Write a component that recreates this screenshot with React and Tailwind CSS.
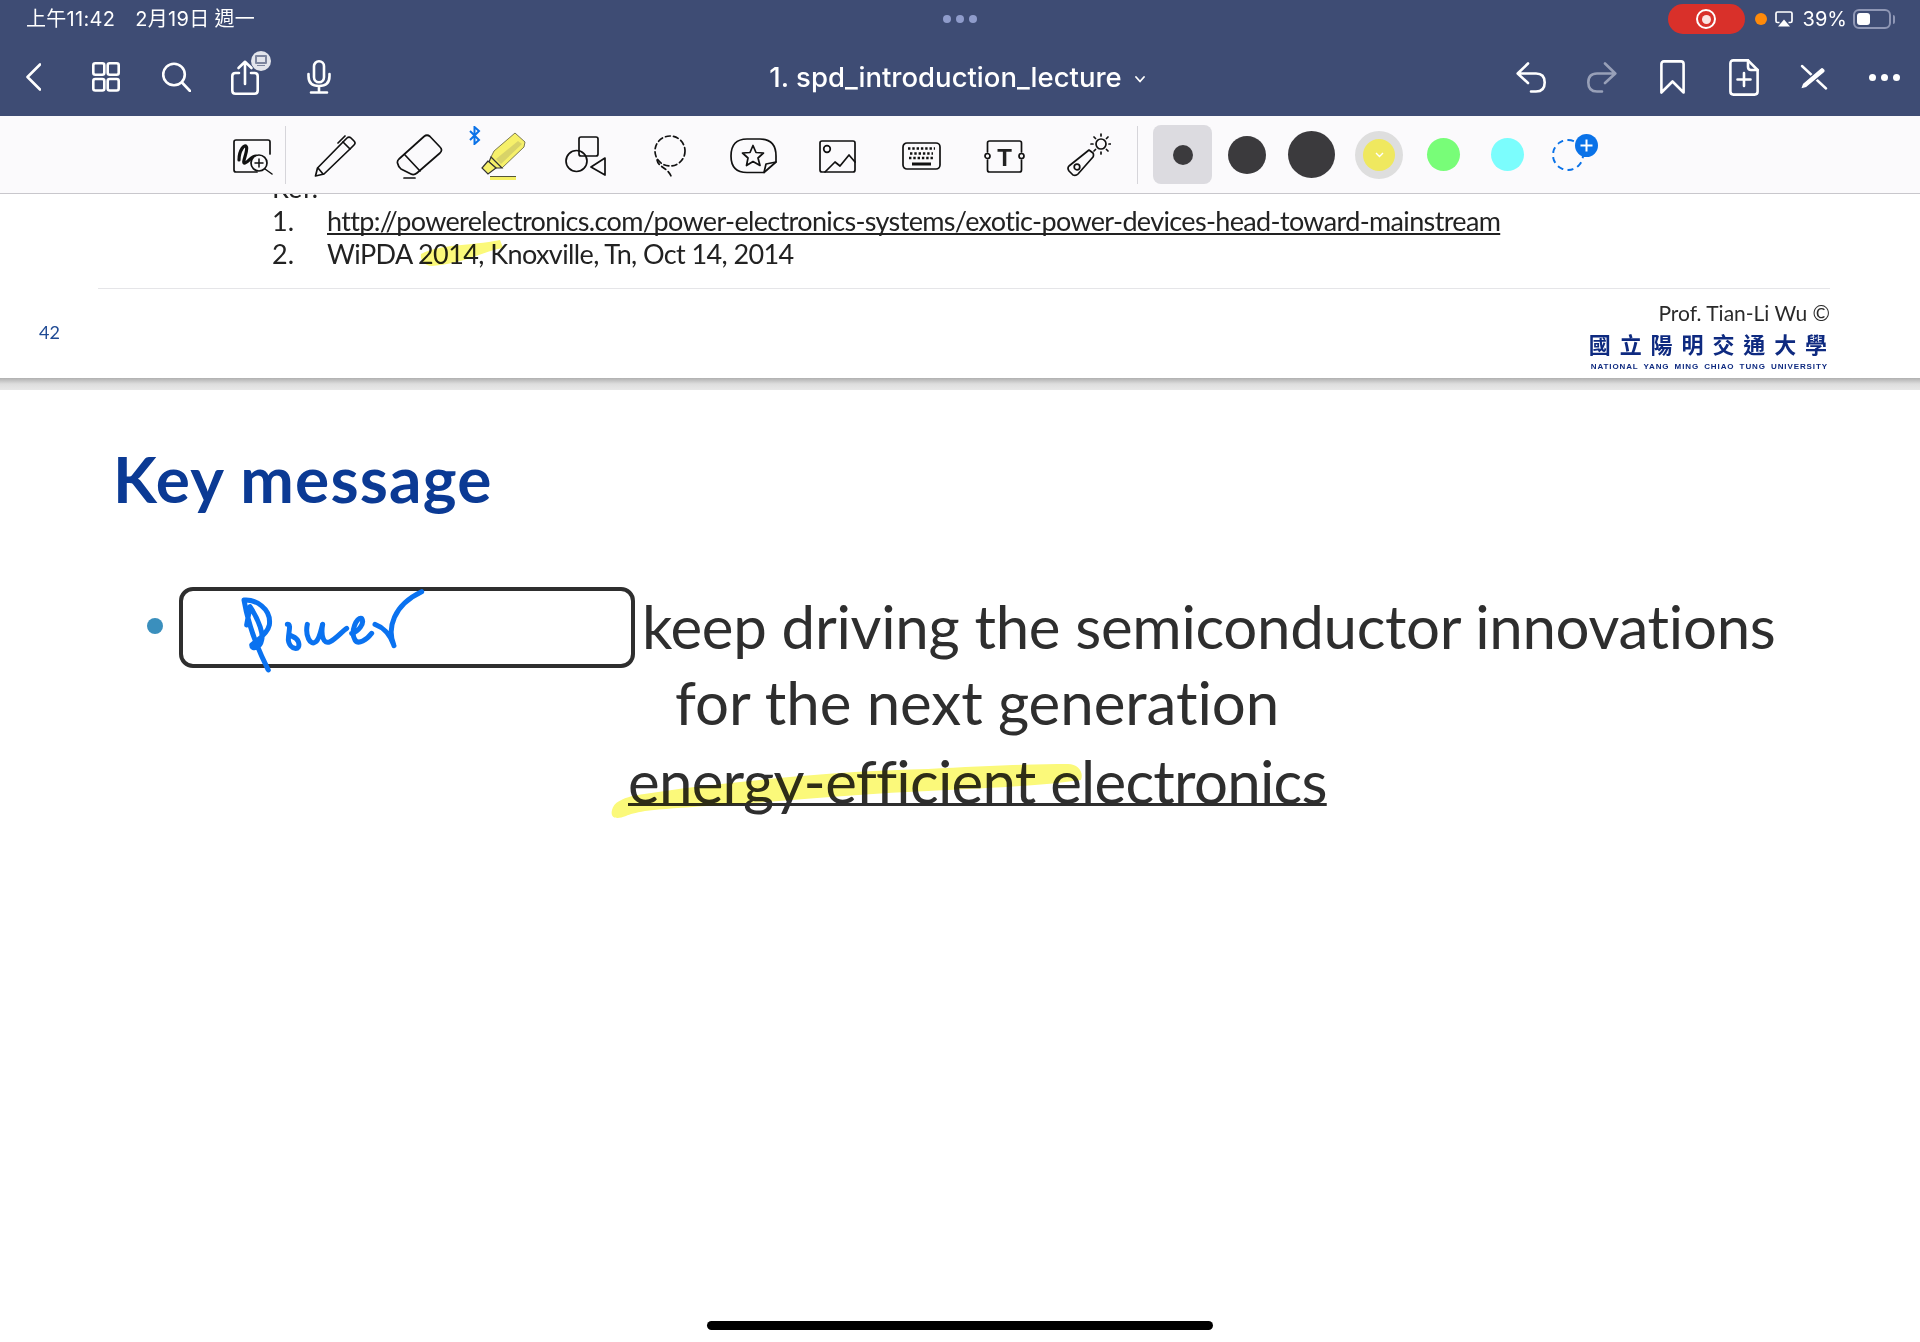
import React from "react";

const ui = "[font-family:Inter,'Noto_Sans_CJK_TC',sans-serif]";
const slide = "[font-family:Lato,'Noto_Sans',sans-serif]";
const ink = "#111";

const NavIcon = ({ w, h, children, className = "" }) => (
  <svg width={w} height={h} viewBox={`0 0 ${w} ${h}`} fill="none" stroke="white" strokeWidth="2.6" strokeLinecap="round" strokeLinejoin="round" className={"shrink-0 " + className}>
    {children}
  </svg>
);

const ToolIcon = ({ w, h, children, className = "" }) => (
  <svg width={w} height={h} viewBox={`0 0 ${w} ${h}`} fill="none" stroke={ink} strokeWidth="1.7" strokeLinecap="round" strokeLinejoin="round" className={"shrink-0 mt-[3px] " + className}>
    {children}
  </svg>
);

const StatusBar = () => (
  <div className="h-[38px] grid grid-cols-[1fr_auto_1fr] items-center text-white">
    <div className="pl-[26px] flex items-center text-[20px] tracking-[0.3px] whitespace-pre">
      <span>上午11:42</span>
      <span className="ml-[20px]">2月19日</span>
      <span className="ml-[5px]">週一</span>
    </div>
    <div className="flex gap-[5px]">
      <span className="w-[8px] h-[8px] rounded-full bg-[#8f9ccb]" />
      <span className="w-[8px] h-[8px] rounded-full bg-[#8f9ccb]" />
      <span className="w-[8px] h-[8px] rounded-full bg-[#8f9ccb]" />
    </div>
    <div className="flex items-center justify-end pr-[25px]">
      <div className="w-[77px] h-[30px] rounded-full bg-[#d9302a] flex items-center justify-center">
        <span className="w-[20px] h-[20px] rounded-full border-2 border-white flex items-center justify-center">
          <span className="w-[9px] h-[9px] rounded-full bg-[#fbe4e2]" />
        </span>
      </div>
      <span className="ml-[10px] w-[12px] h-[12px] rounded-full bg-[#ff8a0a]" />
      <svg width="18" height="16" viewBox="0 0 18 16" fill="none" className="ml-[8px]">
        <path d="M4.5 11.5H2.5Q1 11.5 1 10V2.5Q1 1 2.5 1H15.5Q17 1 17 2.5V10Q17 11.5 15.5 11.5H13.5" stroke="white" strokeWidth="1.7" />
        <path d="M9 8.5L15 15.5H3Z" fill="white" />
      </svg>
      <span className="ml-[10px] text-[20px] leading-none">39%</span>
      <div className="ml-[6px] w-[38px] h-[20px] rounded-[6px] border-2 border-[#8f97b5] p-[2px]">
        <div className="w-[13px] h-full rounded-[3px] bg-white" />
      </div>
      <span className="ml-[2px] w-[2px] h-[9px] rounded-r bg-[#8f97b5]" />
    </div>
  </div>
);

const NavBar = () => (
  <div className="h-[78px] grid grid-cols-[1fr_auto_1fr] items-center text-white">
    <div className="pl-[26px] flex items-center">
      <NavIcon w={15} h={28}>
        <path d="M14 1.5L1.5 14L14 26.5" />
      </NavIcon>
      <NavIcon w={28} h={30} className="ml-[51px]">
        <rect x="1.3" y="1.3" width="11" height="11.5" rx="2" />
        <rect x="15.7" y="1.3" width="11" height="11.5" rx="2" />
        <rect x="1.3" y="17" width="11" height="11.5" rx="2" />
        <rect x="15.7" y="17" width="11" height="11.5" rx="2" />
      </NavIcon>
      <NavIcon w={29} h={30} className="ml-[42px]">
        <circle cx="12" cy="12.5" r="10.8" />
        <path d="M20 20.5L28 29" />
      </NavIcon>
      <div className="relative ml-[40px] w-[28px] h-[35px]">
        <NavIcon w={28} h={35}>
          <path d="M8 13H4.5Q1.3 13 1.3 16V30.5Q1.3 33.7 4.5 33.7H23.5Q26.7 33.7 26.7 30.5V16Q26.7 13 23.5 13H20" />
          <path d="M14 24V2M7.5 8L14 1.8L20.5 8" />
        </NavIcon>
        <span className="absolute left-[20px] top-[-9px] w-[20px] h-[20px] rounded-full bg-[#e3e5ec] flex flex-col items-center justify-center">
          <span className="w-[12px] h-[9px] rounded-[1px] border-2 border-[#7d859e]" />
          <span className="w-[8px] h-[1px] bg-[#7d859e] mt-[1px]" />
        </span>
      </div>
      <NavIcon w={24} h={34} className="ml-[48px]">
        <rect x="7" y="1.3" width="10" height="21" rx="5" />
        <path d="M1.5 14V16Q1.5 26 12 26Q22.5 26 22.5 16V14M12 26V32.5M4 32.5H20" />
      </NavIcon>
    </div>
    <div className={"flex items-center font-medium text-[27.5px] leading-none pr-[6px] mt-[2px] " + ui}>
      <span>1. spd_introduction_lecture</span>
      <svg width="10" height="7" viewBox="0 0 10 7" fill="none" stroke="white" strokeWidth="1.8" strokeLinecap="round" strokeLinejoin="round" className="ml-[13px] mt-[3px]">
        <path d="M1 1L5 5.5L9 1" />
      </svg>
    </div>
    <div className="flex items-center justify-end pr-[20px]">
      <NavIcon w={30} h={31}>
        <path d="M12 1.5L1.7 11.5L12 21M2.5 11.5H20Q28.7 11.5 28.7 20.5Q28.7 29.5 20 29.5H15" />
      </NavIcon>
      <svg width="31" height="31" viewBox="0 0 31 31" fill="none" stroke="#98a0b8" strokeWidth="2.6" strokeLinecap="round" strokeLinejoin="round" className="ml-[40px]">
        <path d="M19 1.5L29.3 11.5L19 21M28.5 11.5H11Q2.3 11.5 2.3 20.5Q2.3 29.5 11 29.5H16" />
      </svg>
      <NavIcon w={25} h={34} className="ml-[43px]">
        <path d="M1.4 32.5V4Q1.4 1.4 4 1.4H21Q23.6 1.4 23.6 4V32.5L12.5 21.5Z" />
      </NavIcon>
      <NavIcon w={30} h={37} className="ml-[44px]">
        <path d="M19 1.4H4.5Q1.4 1.4 1.4 4.5V32.5Q1.4 35.6 4.5 35.6H25.5Q28.6 35.6 28.6 32.5V11Z" />
        <path d="M19 1.4V8Q19 11 22 11H28.6" />
        <path d="M15 14V27M8.5 20.5H21.5" />
      </NavIcon>
      <NavIcon w={29} h={26} className="ml-[40px]">
        <path d="M3 2L27 24.5" strokeWidth="2.4" />
        <path d="M1.5 25L3.5 19.5L21 4.5Q23 2.5 24.5 4L26 5.5Q27 7.5 25 9L7.5 23.5Z" fill="white" stroke="#3e4c74" strokeWidth="1.2" />
      </NavIcon>
      <div className="ml-[41px] flex gap-[5px]">
        <span className="w-[7px] h-[7px] rounded-full bg-white" />
        <span className="w-[7px] h-[7px] rounded-full bg-white" />
        <span className="w-[7px] h-[7px] rounded-full bg-white" />
      </div>
    </div>
  </div>
);

const ToolBar = () => (
  <div className="h-[78px] bg-[#fbfafc] border-b border-[#c8c7cc] flex items-center pl-[233px]">
    <ToolIcon w={40} h={37}>
      <path d="M24 34H3Q1 34 1 32V4Q1 2 3 2H35Q37 2 37 4V16" />
      <path d="M6 22C6 12 12 5 13.5 9C15 14 8 26 12 25C16 24 18 18 23 18" strokeWidth="3.2" />
      <circle cx="26" cy="25" r="8" fill="#fbfafc" />
      <path d="M22 25H30M26 21V29M32 31L39 36" strokeWidth="1.5" />
    </ToolIcon>
    <span className="ml-[12px] w-px h-[58px] bg-[#d6d5da]" />
    <ToolIcon w={42} h={44} className="ml-[28px]">
      <path d="M1.5 42L3.5 34L29 8L36 15L10 40Z" />
      <path d="M29 8L33 4Q35 2 37 4L40 7Q42 9 40 11L36 15M4 34L9 40M24 9L31 2" />
    </ToolIcon>
    <ToolIcon w={47} h={45} className="ml-[40px]">
      <path d="M28 2.5Q31 0 34 2.5L44 13Q47 16 44 19L21 39Q18 41.5 15 40L5 35Q2 32 1.5 29Q1 27 3 25Z" />
      <path d="M9 21L24 37M8 44H19" />
    </ToolIcon>
    <div className="relative ml-[38px] w-[46px] h-[50px] mt-[5px]">
      <svg width="46" height="50" viewBox="0 0 46 50">
        <path d="M34 1L44 10L43 15L21 36L10 25L13 19Z" fill="#f6f06a" stroke="#5e5c3a" strokeWidth="0.8" />
        <path d="M41 12L20 32L15 27L37 9Z" fill="#d8d368" />
        <path d="M10 25L21 36L15 36L8 30Z" fill="#f6f06a" stroke="#333" strokeWidth="1.2" />
        <path d="M7 29L1 36L7 42L15 36Z" fill="#f6f06a" stroke="#333" strokeWidth="1.2" />
        <rect x="9" y="45" width="26" height="3" fill="#f5ef63" />
        <rect x="9" y="44" width="26" height="1" fill="#55553a" />
      </svg>
      <svg width="12" height="19" viewBox="0 0 12 19" fill="none" stroke="#0a72e8" strokeWidth="2" className="absolute left-[-12px] top-[-6px]">
        <path d="M1 5L10 14L5.5 18V1L10 5L1 14" />
      </svg>
    </div>
    <ToolIcon w={41} h={40} className="ml-[38px]">
      <rect x="14" y="1" width="19" height="19" rx="2" />
      <circle cx="11.5" cy="25" r="10.5" />
      <path d="M40 22L26 31L40 39Z" />
    </ToolIcon>
    <ToolIcon w={36} h={42} className="ml-[46px]">
      <circle cx="18" cy="16" r="15" strokeDasharray="5 3.2" />
      <path d="M5 25C6 32 16 33 19 41" strokeDasharray="5 3.2" />
    </ToolIcon>
    <ToolIcon w={47} h={36} className="ml-[42px]">
      <path d="M34 34.5H17Q1 34.5 1 18Q1 1 17 1H30Q46 1 46 18V24Z" />
      <path d="M34 34.5L36 26L46 24" />
      <path d="M23 7.5L26 14.5L33.5 15L28 20L30 27.5L23 23.5L16.5 27.5L18 20L12.5 15L20 14.5Z" />
    </ToolIcon>
    <ToolIcon w={37} h={33} className="ml-[42px]">
      <rect x="1" y="1" width="35" height="31" rx="2" />
      <circle cx="8" cy="9" r="3.3" />
      <path d="M6 32L16 22L21 26L30 15L36 22" />
    </ToolIcon>
    <ToolIcon w={39} h={28} className="ml-[46px]">
      <rect x="1" y="1" width="37" height="26" rx="4" />
      <path d="M6 6.5H33M8 11.5H31M7 16H32" strokeWidth="2.6" strokeDasharray="2.4 1.9" strokeLinecap="butt" />
      <path d="M10 22H29" strokeWidth="3" strokeLinecap="butt" />
    </ToolIcon>
    <ToolIcon w={41} h={33} className="ml-[43px]">
      <path d="M3.5 12V3Q3.5 1 5.5 1H35.5Q37.5 1 37.5 3V12M3.5 20V30Q3.5 32 5.5 32H35.5Q37.5 32 37.5 30V20" />
      <circle cx="3.5" cy="16" r="2.5" />
      <circle cx="37.5" cy="16" r="2.5" />
      <text x="20.5" y="26" textAnchor="middle" fill="#222" stroke="none" fontSize="24" fontWeight="700" fontFamily="Liberation Sans">T</text>
    </ToolIcon>
    <ToolIcon w={44} h={44} className="ml-[42px] mb-[3px]">
      <path d="M22 17L26 20Q27 22 26 24L11 41Q9 43 6 42L2 38Q0 35 2 33Z" />
      <circle cx="10" cy="34" r="2.8" />
      <circle cx="34" cy="11" r="5" />
      <path d="M34 1V3M34 19V21M24 11H26M42 11H44M27 4L28.5 5.5M39.5 16.5L41 18M41 4L39.5 5.5M28.5 16.5L27 18" />
    </ToolIcon>
    <span className="ml-[26px] w-px h-[58px] bg-[#d6d5da]" />
    <div className="ml-[15px] w-[59px] h-[59px] rounded-[8px] bg-[#dcdbe0] flex items-center justify-center">
      <span className="w-[20px] h-[20px] rounded-full bg-[#3b3a3d]" />
    </div>
    <span className="ml-[16px] w-[38px] h-[38px] rounded-full bg-[#3b3a3d]" />
    <span className="ml-[22px] w-[47px] h-[47px] rounded-full bg-[#3b3a3d]" />
    <div className="ml-[20px] w-[48px] h-[48px] rounded-full bg-[#dedede] flex items-center justify-center">
      <div className="w-[32px] h-[32px] rounded-full bg-[#efe85f] flex items-center justify-center">
        <svg width="9" height="6" viewBox="0 0 9 6" fill="none" stroke="white" strokeWidth="1.4">
          <path d="M1 1L4.5 4.5L8 1" />
        </svg>
      </div>
    </div>
    <span className="ml-[24px] w-[33px] h-[33px] rounded-full bg-[#78fd78]" />
    <span className="ml-[31px] w-[33px] h-[33px] rounded-full bg-[#7bfdfd]" />
    <div className="relative ml-[28px] w-[32px] h-[32px]">
      <span className="block w-[32px] h-[32px] rounded-full border-2 border-dashed border-[#0a72e8]" />
      <span className="absolute left-[23px] top-[-5px] w-[23px] h-[23px] rounded-full bg-[#0a72e8] flex items-center justify-center">
        <svg width="13" height="13" viewBox="0 0 13 13" stroke="white" strokeWidth="2">
          <path d="M6.5 0.5V12.5M0.5 6.5H12.5" />
        </svg>
      </span>
    </div>
  </div>
);

const TopSlide = () => (
  <div className={"relative h-[184px] bg-white overflow-hidden text-[#222] " + slide}>
    <div className="ml-[272px] mt-[-23px] text-[27px] leading-[33px]">
      <div>Ref:</div>
      <div className="flex">
        <span className="w-[55px]">1.</span>
        <span className="underline [text-decoration-skip-ink:none] tracking-[-0.65px]">http://powerelectronics.com/power-electronics-systems/exotic-power-devices-head-toward-mainstream</span>
      </div>
      <div className="flex">
        <span className="w-[55px]">2.</span>
        <span className="tracking-[-0.6px]">WiPDA 2014, Knoxville, Tn, Oct 14, 2014</span>
      </div>
    </div>
    <div className="ml-[98px] mr-[90px] mt-[18px] h-px bg-[#e5e5e8]" />
    <div className="flex justify-between pl-[39px] pr-[90px]">
      <span className="mt-[33px] text-[18px] leading-[20px] text-[#1f4a94]">42</span>
      <div className="flex flex-col items-end">
        <span className="mt-[12px] text-[21px] leading-[24px] text-[#2a2a2a]">Prof. Tian-Li Wu ©</span>
        <span className="mt-[6px] text-[22px] leading-[24px] font-bold tracking-[8.9px] mr-[-6px] text-[#0e2a80] [font-family:'Noto_Sans_CJK_TC',sans-serif]">國立陽明交通大學</span>
        <span className="mt-[7px] mr-[2px] text-[8px] leading-[10px] font-bold tracking-[0.9px] [word-spacing:2px] text-[#0e2a80] [font-family:'Liberation_Sans',sans-serif] whitespace-nowrap">NATIONAL YANG MING CHIAO TUNG UNIVERSITY</span>
      </div>
    </div>
    <svg width="1920" height="184" viewBox="0 0 1920 184" className="absolute left-0 top-0 mix-blend-multiply pointer-events-none">
      <path d="M421 60C440 50 470 52 500 46L503 54C480 58 470 68 432 72C424 72 420 66 421 60Z" fill="#fbf97a" />
    </svg>
  </div>
);

const MainSlide = () => (
  <div className={"relative flex-1 flex flex-col bg-white text-[#2e2e2e] " + slide}>
    <h1 className="ml-[113px] mt-[49px] text-[64px] leading-[80px] font-bold tracking-[1.2px] text-[#0b3a94]">Key message</h1>
    <div className="mt-[69px] text-[60px] leading-[76px]">
      <div className="flex items-center whitespace-nowrap">
        <span className="ml-[147px] w-[16px] h-[16px] rounded-full bg-[#3a8fbd]" />
        <span className="ml-[479px] tracking-[-0.3px]">keep driving the semiconductor innovations</span>
      </div>
      <div className="ml-[675px] tracking-[-0.05px]">for the next generation</div>
      <div className="ml-[628px] mt-[3px] w-fit tracking-[-0.75px] underline [text-decoration-skip-ink:none] decoration-[3px] underline-offset-[-1px]">energy-efficient electronics</div>
    </div>
    <div className="absolute left-[179px] top-[197px] w-[456px] h-[81px] rounded-[14px] border-4 border-[#2e2e2e] bg-white" />
    <svg width="200" height="90" viewBox="0 0 600 270" fill="none" stroke="#0a72f0" strokeWidth="15" strokeLinecap="round" strokeLinejoin="round" className="absolute left-[230px] top-[195px]">
      <path d="M115 255C100 225 60 150 42 45C75 42 125 70 118 120C112 150 75 170 65 180C65 195 90 190 95 165C100 150 90 110 60 65L50 120" />
      <path d="M172 118C185 118 175 140 175 165C178 195 215 200 205 170C200 155 185 155 180 150" />
      <path d="M232 118C225 150 240 185 258 170C270 160 275 125 278 118C272 150 280 180 300 170C320 160 335 140 350 130" />
      <path d="M365 145C385 140 405 115 395 100C380 95 360 140 375 165C385 180 410 165 425 145" />
      <path d="M435 118C455 125 480 145 492 182C470 130 490 60 575 20" />
    </svg>
    <svg width="1920" height="150" viewBox="0 0 1920 150" className="absolute left-0 top-[320px] mix-blend-multiply pointer-events-none">
      <path d="M612 100C614 92 622 89 632 86C680 78 720 74 779 68C830 63 880 60 928 59C980 56 1030 54 1068 54C1078 54 1084 62 1081 70C1040 76 990 78 928 81C880 83 830 87 779 91C730 95 680 97 645 101C635 103 630 104 626 106C616 110 610 108 612 100Z" fill="#fbf97a" />
    </svg>
    <div className="mt-auto mb-[12px] mx-auto w-[506px] h-[9px] rounded-full bg-black" />
  </div>
);

export default function App() {
  return (
    <div className={"w-[1920px] h-[1342px] overflow-hidden flex flex-col bg-white " + ui}>
      <div className="bg-[#3e4c74]">
        <StatusBar />
        <NavBar />
      </div>
      <ToolBar />
      <TopSlide />
      <div className="h-[12px] bg-gradient-to-b from-[#b0b0b0] via-[#dedede] to-[#e8e8e8]" />
      <MainSlide />
    </div>
  );
}
